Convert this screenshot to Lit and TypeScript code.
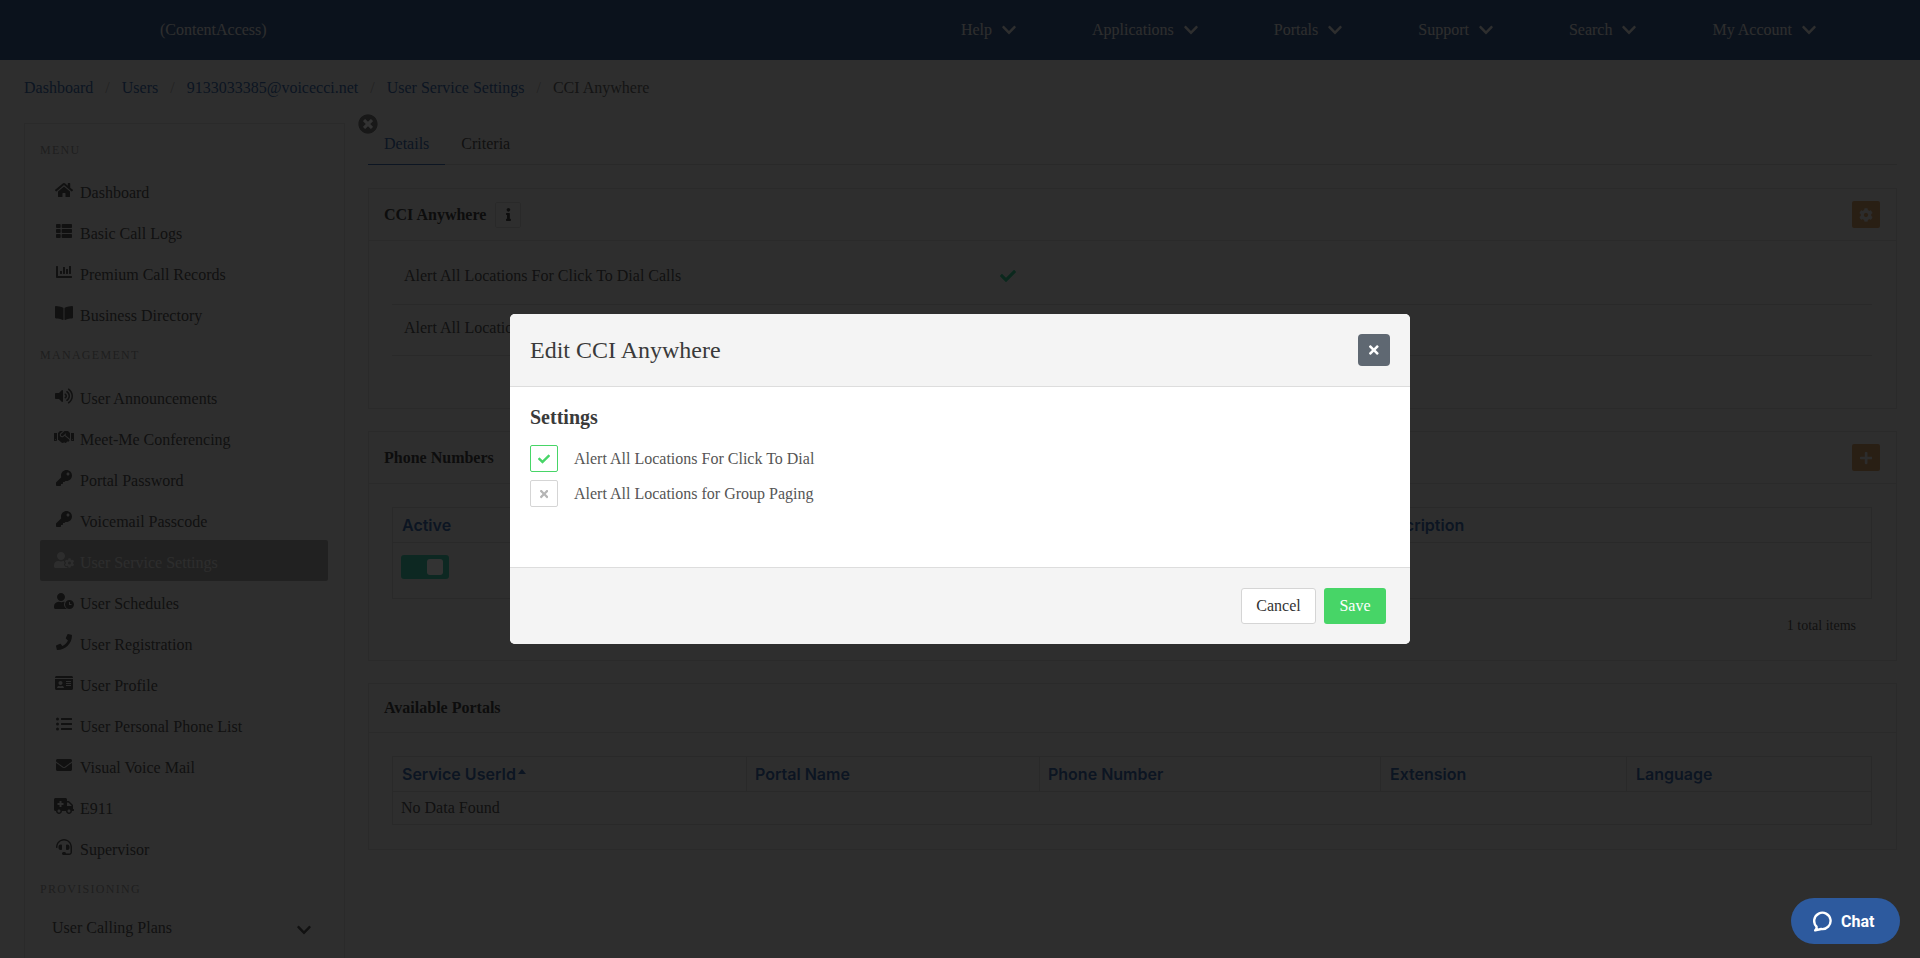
import { LitElement, html, css, svg } from "lit";
import { customElement } from "lit/decorators.js";

type Ic = [number, string];
const I: Record<string, Ic> = {
  check: [512, "M173.898 439.404l-166.4-166.4c-9.997-9.997-9.997-26.206 0-36.204l36.203-36.204c9.997-9.998 26.207-9.998 36.204 0L192 312.69 432.095 72.596c9.997-9.997 26.207-9.997 36.204 0l36.203 36.204c9.997 9.997 9.997 26.206 0 36.204l-294.4 294.401c-9.998 9.997-26.207 9.997-36.204-.001z"],
  times: [352, "M242.72 256l100.07-100.07c12.28-12.28 12.28-32.19 0-44.48l-22.24-22.24c-12.28-12.28-32.19-12.28-44.48 0L176 189.28 75.93 89.21c-12.28-12.28-32.19-12.28-44.48 0L9.21 111.45c-12.28 12.28-12.28 32.19 0 44.48L109.28 256 9.21 356.07c-12.28 12.28-12.28 32.19 0 44.48l22.24 22.24c12.28 12.28 32.2 12.28 44.48 0L176 322.72l100.07 100.07c12.28 12.28 32.2 12.28 44.48 0l22.24-22.24c12.28-12.28 12.28-32.19 0-44.48L242.72 256z"],
  chevron: [448, "M207.029 381.476L12.686 187.132c-9.373-9.373-9.373-24.569 0-33.941l22.667-22.667c9.357-9.357 24.522-9.375 33.901-.04L224 284.505l154.745-154.021c9.379-9.335 24.544-9.317 33.901.04l22.667 22.667c9.373 9.373 9.373 24.569 0 33.941L240.971 381.476c-9.373 9.372-24.569 9.372-33.942 0z"],
  home: [576, "M280.37 148.26L96 300.11V464a16 16 0 0 0 16 16l112.06-.29a16 16 0 0 0 15.92-16V368a16 16 0 0 1 16-16h64a16 16 0 0 1 16 16v95.64a16 16 0 0 0 16 16.05L464 480a16 16 0 0 0 16-16V300L295.67 148.26a12.19 12.19 0 0 0-15.3 0zM571.6 251.47L488 182.56V44.05a12 12 0 0 0-12-12h-56a12 12 0 0 0-12 12v72.61L318.47 43a48 48 0 0 0-61 0L4.34 251.47a12 12 0 0 0-1.6 16.9l25.5 31A12 12 0 0 0 45.15 301l235.22-193.74a12.19 12.19 0 0 1 15.3 0L530.9 301a12 12 0 0 0 16.9-1.6l25.5-31a12 12 0 0 0-1.7-16.93z"],
  thList: [512, "M149.333 216v80c0 13.255-10.745 24-24 24H24c-13.255 0-24-10.745-24-24v-80c0-13.255 10.745-24 24-24h101.333c13.255 0 24 10.745 24 24zM0 376v80c0 13.255 10.745 24 24 24h101.333c13.255 0 24-10.745 24-24v-80c0-13.255-10.745-24-24-24H24c-13.255 0-24 10.745-24 24zM125.333 32H24C10.745 32 0 42.745 0 56v80c0 13.255 10.745 24 24 24h101.333c13.255 0 24-10.745 24-24V56c0-13.255-10.745-24-24-24zm80 448H488c13.255 0 24-10.745 24-24v-80c0-13.255-10.745-24-24-24H205.333c-13.255 0-24 10.745-24 24v80c0 13.255 10.745 24 24 24zm-24-424v80c0 13.255 10.745 24 24 24H488c13.255 0 24-10.745 24-24V56c0-13.255-10.745-24-24-24H205.333c-13.255 0-24 10.745-24 24zm24 264H488c13.255 0 24-10.745 24-24v-80c0-13.255-10.745-24-24-24H205.333c-13.255 0-24 10.745-24 24v80c0 13.255 10.745 24 24 24z"],
  chart: [512, "M332.8 320h38.4c6.4 0 12.8-6.4 12.8-12.8V172.8c0-6.4-6.4-12.8-12.8-12.8h-38.4c-6.4 0-12.8 6.4-12.8 12.8v134.4c0 6.4 6.4 12.8 12.8 12.8zm96 0h38.4c6.4 0 12.8-6.4 12.8-12.8V76.8c0-6.4-6.4-12.8-12.8-12.8h-38.4c-6.4 0-12.8 6.4-12.8 12.8v230.4c0 6.4 6.4 12.8 12.8 12.8zm-288 0h38.4c6.4 0 12.8-6.4 12.8-12.8v-70.4c0-6.4-6.4-12.8-12.8-12.8h-38.4c-6.4 0-12.8 6.4-12.8 12.8v70.4c0 6.4 6.4 12.8 12.8 12.8zm96 0h38.4c6.4 0 12.8-6.4 12.8-12.8V108.8c0-6.4-6.4-12.8-12.8-12.8h-38.4c-6.4 0-12.8 6.4-12.8 12.8v198.4c0 6.4 6.4 12.8 12.8 12.8zM496 384H64V80c0-8.84-7.16-16-16-16H16C7.16 64 0 71.16 0 80v336c0 17.67 14.33 32 32 32h464c8.84 0 16-7.16 16-16v-32c0-8.84-7.16-16-16-16z"],
  book: [576, "M542.22 32.05c-54.8 3.11-163.72 14.43-230.96 55.59-4.64 2.84-7.27 7.89-7.27 13.17v363.87c0 11.55 12.63 18.85 23.28 13.49 69.18-34.82 169.23-44.32 218.7-46.92 16.89-.89 30.02-14.43 30.02-30.66V62.75c.01-17.71-15.35-31.74-33.77-30.7zM264.73 87.64C197.5 46.48 88.58 35.17 33.78 32.05 15.36 31.01 0 45.04 0 62.75V400.6c0 16.24 13.13 29.78 30.02 30.66 49.49 2.6 149.59 12.11 218.77 46.95 10.62 5.35 23.21-1.94 23.21-13.46V100.63c0-5.29-2.62-10.14-7.27-12.99z"],
  volume: [576, "M215.03 71.05L126.06 160H24c-13.26 0-24 10.74-24 24v144c0 13.25 10.74 24 24 24h102.06l88.97 88.95c15.03 15.03 40.97 4.47 40.97-16.97V88.02c0-21.46-25.96-31.98-40.97-16.97zm233.32-51.08c-11.17-7.33-26.18-4.24-33.51 6.95-7.34 11.17-4.22 26.18 6.95 33.51 66.27 43.49 105.82 116.6 105.82 195.58 0 78.98-39.55 152.09-105.82 195.58-11.17 7.32-14.29 22.34-6.95 33.5 7.04 10.71 21.93 14.56 33.51 6.95C528.27 439.58 576 351.33 576 256S528.27 72.43 448.35 19.97zM480 256c0-63.53-32.06-121.94-85.77-156.24-11.19-7.14-26.03-3.82-33.12 7.46s-3.78 26.21 7.41 33.36C408.27 165.97 432 209.11 432 256s-23.73 90.03-63.48 115.42c-11.19 7.14-14.5 22.07-7.41 33.36 6.51 10.36 21.12 15.14 33.12 7.46C447.94 377.94 480 319.54 480 256zm-141.77-76.87c-11.58-6.33-26.19-2.16-32.61 9.45-6.39 11.61-2.16 26.2 9.45 32.61C327.98 228.28 336 241.63 336 256c0 14.38-8.02 27.72-20.92 34.81-11.61 6.41-15.84 21-9.45 32.61 6.43 11.66 21.05 15.8 32.61 9.45 28.23-15.55 45.77-45 45.77-76.88s-17.54-61.32-45.78-76.86z"],
  hands: [640, "M434.7 64h-85.9c-8 0-15.7 3-21.6 8.4l-98.3 90c-.1.1-.2.3-.3.4-16.6 15.6-16.3 40.5-2.1 56 12.7 13.9 39.4 17.6 56.1 2.7.1-.1.3-.1.4-.2l79.9-73.2c6.5-5.9 16.7-5.5 22.6 1 6 6.5 5.5 16.6-1 22.6l-26.1 23.9L504 313.8c2.9 2.4 5.5 5 7.9 7.7V128l-54.6-54.6c-5.9-6-14.1-9.4-22.6-9.4zM544 128.2v223.9c0 17.7 14.3 32 32 32h64V128.2h-96zm48 223.9c-8.8 0-16-7.2-16-16s7.2-16 16-16 16 7.2 16 16-7.2 16-16 16zM0 384h64c17.7 0 32-14.3 32-32V128.2H0V384zm48-63.9c8.8 0 16 7.2 16 16s-7.2 16-16 16-16-7.2-16-16c0-8.9 7.2-16 16-16zm435.9 18.6L334.6 217.5l-30 27.5c-29.7 27.1-75.2 24.5-101.7-4.4-26.9-29.4-24.8-74.9 4.4-101.7L289.1 64h-83.8c-8.5 0-16.6 3.4-22.6 9.4L128 128v223.9h18.3l90.5 81.9c27.4 22.3 67.7 18.1 90-9.3l.2-.2 17.9 15.5c15.9 13 39.4 10.5 52.3-5.4l31.4-38.6 5.4 4.4c13.7 11.1 33.9 9.1 45-4.7l9.5-11.7c11.2-13.8 9.1-33.9-4.6-45.1z"],
  key: [512, "M512 176.001C512 273.203 433.202 352 336 352c-11.22 0-22.19-1.062-32.827-3.069l-24.012 27.014A23.999 23.999 0 0 1 261.223 384H224v40c0 13.255-10.745 24-24 24h-40v40c0 13.255-10.745 24-24 24H24c-13.255 0-24-10.745-24-24v-78.059c0-6.365 2.529-12.47 7.029-16.971l161.802-161.802C163.108 213.814 160 195.271 160 176 160 78.798 238.797.001 335.999 0 433.488-.001 512 78.511 512 176.001zM336 128c0 26.51 21.49 48 48 48s48-21.49 48-48-21.49-48-48-48-48 21.49-48 48z"],
  userCog: [640, "M610.5 373.3c2.6-14.1 2.6-28.5 0-42.6l25.8-14.9c3-1.7 4.3-5.2 3.3-8.5-6.7-21.6-18.2-41.2-33.2-57.4-2.3-2.5-6-3.1-9-1.4l-25.8 14.9c-10.9-9.3-23.4-16.5-36.9-21.3v-29.8c0-3.4-2.4-6.4-5.7-7.1-22.3-5-45-4.8-66.2 0-3.3.7-5.7 3.7-5.7 7.1v29.8c-13.5 4.8-26 12-36.9 21.3l-25.8-14.9c-2.9-1.7-6.7-1.1-9 1.4-15 16.2-26.5 35.8-33.2 57.4-1 3.3.4 6.8 3.3 8.5l25.8 14.9c-2.6 14.1-2.6 28.5 0 42.6l-25.8 14.9c-3 1.7-4.3 5.2-3.3 8.5 6.7 21.6 18.2 41.1 33.2 57.4 2.3 2.5 6 3.1 9 1.4l25.8-14.9c10.9 9.3 23.4 16.5 36.9 21.3v29.8c0 3.4 2.4 6.4 5.7 7.1 22.3 5 45 4.8 66.2 0 3.3-.7 5.7-3.7 5.7-7.1v-29.8c13.5-4.8 26-12 36.9-21.3l25.8 14.9c2.9 1.7 6.7 1.1 9-1.4 15-16.2 26.5-35.8 33.2-57.4 1-3.3-.4-6.8-3.3-8.5l-25.8-14.9zM496 400.5c-26.8 0-48.5-21.8-48.5-48.5s21.8-48.5 48.5-48.5 48.5 21.8 48.5 48.5-21.7 48.5-48.5 48.5zM224 256c70.7 0 128-57.3 128-128S294.7 0 224 0 96 57.3 96 128s57.3 128 128 128zm201.2 226.5c-2.3-1.2-4.6-2.6-6.8-3.9l-7.9 4.6c-6 3.4-12.8 5.3-19.6 5.3-10.9 0-21.4-4.6-28.9-12.6-18.3-19.8-32.3-43.9-40.2-69.6-5.5-17.7 1.9-36.4 17.9-45.7l7.9-4.6c-.1-2.6-.1-5.2 0-7.8l-7.9-4.6c-16-9.2-23.4-28-17.9-45.7.9-2.9 2.2-5.8 3.2-8.7-3.8-.3-7.5-1.2-11.4-1.2h-16.7c-22.2 10.2-46.9 16-72.9 16s-50.6-5.8-72.9-16h-16.7C60.2 288 0 348.2 0 422.4V464c0 26.5 21.5 48 48 48h352c10.1 0 19.5-3.2 27.2-8.5-1.2-3.8-2-7.7-2-11.8v-9.2z"],
  userClock: [640, "M496 224c-79.6 0-144 64.4-144 144s64.4 144 144 144 144-64.4 144-144-64.4-144-144-144zm64 150.3c0 5.3-4.4 9.7-9.7 9.7h-60.6c-5.3 0-9.7-4.4-9.7-9.7v-76.6c0-5.3 4.4-9.7 9.7-9.7h12.6c5.3 0 9.7 4.4 9.7 9.7V352h38.3c5.3 0 9.7 4.4 9.7 9.7v12.6zM224 256c70.7 0 128-57.3 128-128S294.7 0 224 0 96 57.3 96 128s57.3 128 128 128zm96 112c0-31.4 9.2-60.6 24.9-85.3-6.4-.9-12.7-2.7-19.4-2.7h-16.7c-22.2 10.2-46.9 16-72.9 16s-50.6-5.8-72.9-16h-16.7C60.2 288 0 348.2 0 422.4V464c0 26.5 21.5 48 48 48h352c5.5 0 10.8-1 15.7-2.7C358.6 480.3 320 428.6 320 368z"],
  phone: [512, "M493.4 24.6l-104-24c-11.3-2.6-22.9 3.3-27.5 13.9l-48 112c-4.2 9.8-1.4 21.3 6.9 28l60.6 49.6c-36 76.7-98.9 140.5-177.2 177.2l-49.6-60.6c-6.8-8.3-18.2-11.1-28-6.9l-112 48C3.9 366.5-2 378.1.6 389.4l24 104C27.1 504.2 36.7 512 48 512c256.1 0 464-207.5 464-464 0-11.2-7.7-20.9-18.6-23.4z"],
  idCard: [576, "M528 32H48C21.5 32 0 53.5 0 80v16h576V80c0-26.5-21.5-48-48-48zM0 432c0 26.5 21.5 48 48 48h480c26.5 0 48-21.5 48-48V128H0v304zm352-232c0-4.4 3.6-8 8-8h144c4.4 0 8 3.6 8 8v16c0 4.4-3.6 8-8 8H360c-4.4 0-8-3.6-8-8v-16zm0 64c0-4.4 3.6-8 8-8h144c4.4 0 8 3.6 8 8v16c0 4.4-3.6 8-8 8H360c-4.4 0-8-3.6-8-8v-16zm0 64c0-4.4 3.6-8 8-8h144c4.4 0 8 3.6 8 8v16c0 4.4-3.6 8-8 8H360c-4.4 0-8-3.6-8-8v-16zM176 192c35.3 0 64 28.7 64 64s-28.7 64-64 64-64-28.7-64-64 28.7-64 64-64zM67.1 396.2C75.5 370.5 99.6 352 128 352h8.2c12.3 5.1 25.7 8 39.8 8s27.6-2.9 39.8-8h8.2c28.4 0 52.5 18.5 60.9 44.2 3.2 9.9-5.2 19.8-15.6 19.8H82.7c-10.4 0-18.8-10-15.6-19.8z"],
  list: [512, "M48 48a48 48 0 1 0 48 48 48 48 0 0 0-48-48zm0 160a48 48 0 1 0 48 48 48 48 0 0 0-48-48zm0 160a48 48 0 1 0 48 48 48 48 0 0 0-48-48zm448 16H176a16 16 0 0 0-16 16v32a16 16 0 0 0 16 16h320a16 16 0 0 0 16-16v-32a16 16 0 0 0-16-16zm0-320H176a16 16 0 0 0-16 16v32a16 16 0 0 0 16 16h320a16 16 0 0 0 16-16V80a16 16 0 0 0-16-16zm0 160H176a16 16 0 0 0-16 16v32a16 16 0 0 0 16 16h320a16 16 0 0 0 16-16v-32a16 16 0 0 0-16-16z"],
  envelope: [512, "M502.3 190.8c3.9-3.1 9.7-.2 9.7 4.7V400c0 26.5-21.5 48-48 48H48c-26.5 0-48-21.5-48-48V195.6c0-5 5.7-7.8 9.7-4.7 22.4 17.4 52.1 39.5 154.1 113.6 21.1 15.4 56.7 47.8 92.2 47.6 35.7.3 72-32.8 92.3-47.6 102-74.1 131.6-96.3 154-113.7zM256 320c23.2.4 56.6-29.2 73.4-41.4 132.7-96.3 142.8-104.7 173.4-128.7 5.8-4.5 9.2-11.5 9.2-18.9v-19c0-26.5-21.5-48-48-48H48C21.5 64 0 85.5 0 112v19c0 7.4 3.4 14.3 9.2 18.9 30.6 23.9 40.7 32.4 173.4 128.7 16.8 12.2 50.2 41.8 73.4 41.4z"],
  ambulance: [640, "M624 352h-16V243.9c0-12.7-5.1-24.9-14.1-33.9L494 110.1c-9-9-21.2-14.1-33.9-14.1H416V48c0-26.5-21.5-48-48-48H48C21.5 0 0 21.5 0 48v320c0 26.5 21.5 48 48 48h16c0 53 43 96 96 96s96-43 96-96h128c0 53 43 96 96 96s96-43 96-96h48c8.8 0 16-7.2 16-16v-32c0-8.8-7.2-16-16-16zM160 464c-26.5 0-48-21.5-48-48s21.5-48 48-48 48 21.5 48 48-21.5 48-48 48zm144-248c0 4.4-3.6 8-8 8h-56v56c0 4.4-3.6 8-8 8h-48c-4.4 0-8-3.6-8-8v-56h-56c-4.4 0-8-3.6-8-8v-48c0-4.4 3.6-8 8-8h56v-56c0-4.4 3.6-8 8-8h48c4.4 0 8 3.6 8 8v56h56c4.4 0 8 3.6 8 8v48zm176 248c-26.5 0-48-21.5-48-48s21.5-48 48-48 48 21.5 48 48-21.5 48-48 48zm80-208H416V144h44.1l99.9 99.9V256z"],
  headset: [512, "M192 208c0-17.67-14.33-32-32-32h-16c-35.35 0-64 28.65-64 64v48c0 35.35 28.65 64 64 64h16c17.67 0 32-14.33 32-32V208zm176 144c35.35 0 64-28.65 64-64v-48c0-35.35-28.65-64-64-64h-16c-17.67 0-32 14.33-32 32v112c0 17.67 14.33 32 32 32h16zM256 0C113.18 0 4.58 118.83 0 256v16c0 8.84 7.16 16 16 16h16c8.84 0 16-7.16 16-16v-16c0-114.69 93.31-208 208-208s208 93.31 208 208h-.12c.08 2.43.12 165.72.12 165.72 0 23.35-18.93 42.28-42.28 42.28H320c0-26.51-21.49-48-48-48h-32c-26.51 0-48 21.49-48 48s21.49 48 48 48h181.72c49.86 0 90.28-40.42 90.28-90.28V256C507.42 118.83 398.82 0 256 0z"],
  info: [192, "M20 424.229h20V279.771H20c-11.046 0-20-8.954-20-20V212c0-11.046 8.954-20 20-20h112c11.046 0 20 8.954 20 20v212.229h20c11.046 0 20 8.954 20 20V492c0 11.046-8.954 20-20 20H20c-11.046 0-20-8.954-20-20v-47.771c0-11.046 8.954-20 20-20zM96 0C56.235 0 24 32.235 24 72s32.235 72 72 72 72-32.235 72-72S135.764 0 96 0z"],
  cog: [512, "M487.4 315.7l-42.6-24.6c4.3-23.2 4.3-47 0-70.2l42.6-24.6c4.9-2.8 7.1-8.6 5.5-14-11.1-35.6-30-67.8-54.7-94.6-3.8-4.1-10-5.1-14.8-2.3L380.8 110c-17.9-15.4-38.5-27.3-60.8-35.1V25.8c0-5.6-3.9-10.5-9.4-11.7-36.7-8.2-74.3-7.8-109.2 0-5.5 1.2-9.4 6.1-9.4 11.7V75c-22.2 7.9-42.8 19.8-60.8 35.1L88.7 85.5c-4.9-2.8-11-1.9-14.8 2.3-24.7 26.7-43.6 58.9-54.7 94.6-1.7 5.4.6 11.2 5.5 14L67.3 221c-4.3 23.2-4.3 47 0 70.2l-42.6 24.6c-4.9 2.8-7.1 8.6-5.5 14 11.1 35.6 30 67.8 54.7 94.6 3.8 4.1 10 5.1 14.8 2.3l42.6-24.6c17.9 15.4 38.5 27.3 60.8 35.1v49.2c0 5.6 3.9 10.5 9.4 11.7 36.7 8.2 74.3 7.8 109.2 0 5.5-1.2 9.4-6.1 9.4-11.7v-49.2c22.2-7.9 42.8-19.8 60.8-35.1l42.6 24.6c4.9 2.8 11 1.9 14.8-2.3 24.7-26.7 43.6-58.9 54.7-94.6 1.5-5.5-.7-11.3-5.6-14.1zM256 336c-44.1 0-80-35.9-80-80s35.9-80 80-80 80 35.9 80 80-35.9 80-80 80z"],
  plus: [448, "M416 208H272V64c0-17.67-14.33-32-32-32h-32c-17.67 0-32 14.33-32 32v144H32c-17.67 0-32 14.33-32 32v32c0 17.67 14.33 32 32 32h144v144c0 17.67 14.33 32 32 32h32c17.67 0 32-14.33 32-32V304h144c17.67 0 32-14.33 32-32v-32c0-17.67-14.33-32-32-32z"],
  timesCircle: [512, "M256 8C119 8 8 119 8 256s111 248 248 248 248-111 248-248S393 8 256 8zm121.6 313.1c4.7 4.7 4.7 12.3 0 17L338 377.6c-4.7 4.7-12.3 4.7-17 0L256 312l-65.1 65.6c-4.7 4.7-12.3 4.7-17 0L134.4 338c-4.7-4.7-4.7-12.3 0-17l65.6-65-65.6-65.1c-4.7-4.7-4.7-12.3 0-17l39.6-39.6c4.7-4.7 12.3-4.7 17 0l65 65.7 65.1-65.6c4.7-4.7 12.3-4.7 17 0l39.6 39.6c4.7 4.7 4.7 12.3 0 17L312 256l65.6 65.1z"],
};

const icon = (name: string) => {
  const [w, d] = I[name];
  return html`<svg class="ic" viewBox="0 0 ${w} 512" fill="currentColor" aria-hidden="true">${svg`<path d=${d}></path>`}</svg>`;
};

const NAV = ["Help", "Applications", "Portals", "Support", "Search", "My Account"];
const CRUMBS = ["Dashboard", "Users", "9133033385@voicecci.net", "User Service Settings"];
const MENU: [string, string][] = [
  ["home", "Dashboard"],
  ["thList", "Basic Call Logs"],
  ["chart", "Premium Call Records"],
  ["book", "Business Directory"],
];
const MANAGEMENT: [string, string][] = [
  ["volume", "User Announcements"],
  ["hands", "Meet-Me Conferencing"],
  ["key", "Portal Password"],
  ["key", "Voicemail Passcode"],
  ["userCog", "User Service Settings"],
  ["userClock", "User Schedules"],
  ["phone", "User Registration"],
  ["idCard", "User Profile"],
  ["list", "User Personal Phone List"],
  ["envelope", "Visual Voice Mail"],
  ["ambulance", "E911"],
  ["headset", "Supervisor"],
];
const PORTAL_COLS = ["Service UserId", "Portal Name", "Phone Number", "Extension", "Language"];

@customElement("app-root")
export class AppRoot extends LitElement {
  static styles = css`
    :host {
      display: block;
      width: 1920px;
      height: 958px;
      overflow: hidden;
      position: relative;
      background: #e7e7e7;
      font-family: "Liberation Serif", serif;
      font-size: 16px;
      line-height: 24px;
      color: #555;
    }
    .ic { display: block; height: 1em; width: auto; }

    .nav {
      height: 60px;
      background: #385a8c;
      color: #e4e4e4;
      display: flex;
      align-items: center;
      padding: 0 104px 0 160px;
    }
    .nav-items { margin-left: auto; display: flex; gap: 76px; }
    .nav-item { display: flex; align-items: center; gap: 10px; }
    .nav-item .ic { height: 16px; }

    .crumbs { display: flex; gap: 12px; padding: 16px 24px 23px; }
    .crumbs a { color: #3e6aa8; }
    .crumbs .sep { color: #aaa; }
    .crumbs .cur { color: #666; }

    .main {
      display: grid;
      grid-template-columns: 321px 1529px;
      column-gap: 23px;
      padding-left: 24px;
      align-items: start;
    }
    .side {
      border: 1px solid #d0d0d0;
      padding: 5px 16px 0 15px;
      height: 900px;
      box-sizing: border-box;
    }
    .label {
      height: 42px;
      display: flex;
      align-items: center;
      font-size: 12px;
      letter-spacing: 1.3px;
      color: #999;
    }
    .label.first { height: 41px; }
    .row {
      height: 41px;
      display: flex;
      align-items: center;
      gap: 6px;
      padding: 5px 0 0 14px;
      box-sizing: border-box;
      border-radius: 2px;
    }
    .row .w { width: 20px; display: flex; justify-content: center; margin-bottom: 6px; }
    .row .ic { height: 16px; }
    .row.on { background: #a4a4a4; color: #e0e0e0; }
    .row.sub { padding: 0 17px 0 12px; justify-content: space-between; height: 36px; }
    .row.sub .ic { height: 16px; margin-top: 4px; }

    .right { position: relative; padding-top: 1px; display: flex; flex-direction: column; }
    .dismiss { position: absolute; left: -10px; top: -9px; color: #777; font-size: 20px; background: #fff; border-radius: 50%; width: 20px; height: 20px; }
    .tabs { display: flex; height: 40px; border-bottom: 1px solid #ccc; margin-bottom: 23px; }
    .tab { padding: 8px 16px 0; height: 32px; }
    .tab.on { color: #3e6aa8; border-bottom: 1px solid #3e6aa8; }

    .card { border: 1px solid #d0d0d0; margin-bottom: 22px; }
    .card-h {
      height: 51px;
      border-bottom: 1px solid #d0d0d0;
      padding: 0 16px 0 15px;
      display: flex;
      align-items: center;
      font-weight: bold;
      color: #444;
    }
    .card-h.short { height: 48px; }
    .info { margin-left: 9px; width: 26px; height: 26px; border: 1px solid #ccc; border-radius: 2px; box-sizing: border-box; display: flex; align-items: center; justify-content: center; }
    .info .ic { height: 13px; }
    .act { margin-left: auto; width: 28px; height: 27px; background: #cc9a66; color: #ddd; display: flex; align-items: center; justify-content: center; border-radius: 2px; }
    .act .ic { height: 14px; }

    .kv { padding: 23px 24px 52px 23px; }
    .kv-row { display: grid; grid-template-columns: 596px 1fr; border-bottom: 1px solid #ccc; padding: 0 0 16px 12px; }
    .kv-row + .kv-row { padding: 11px 0 15px 12px; }
    .kv-row .ok { color: #38c890; display: flex; align-items: center; }
    .kv-row .ok .ic { height: 16px; }

    .tb-wrap { padding: 23px 24px 0 23px; }
    .tb { border: 1px solid #ccc; }
    .tr { display: grid; }
    .th {
      height: 34px;
      display: flex;
      align-items: center;
      gap: 2px;
      padding-left: 9px;
      font-family: Inter, "Liberation Sans", sans-serif;
      font-weight: 600;
      color: #3e6aa8;
      border-bottom: 1px solid #ccc;
      box-sizing: content-box;
    }
    .th + .th { border-left: 1px solid #ccc; padding-left: 8px; }
    .th:nth-child(n + 4) { padding-left: 9px; }
    .phones .th + .th { border-left: 0; }
    .phones .tr { grid-template-columns: 974px 1fr; }
    .portals .tr { grid-template-columns: 353px 293px 341px 246px 1fr; }
    .caret { width: 0; height: 0; border: 4px solid transparent; border-top: 0; border-bottom: 5px solid #3e6aa8; margin-bottom: 6px; }
    .td { padding: 12px 8px 19px; }
    .toggle { width: 48px; height: 24px; background: #40c8a8; border-radius: 3px; display: flex; align-items: center; justify-content: flex-end; padding-right: 6px; box-sizing: border-box; }
    .toggle i { display: block; width: 16px; height: 16px; background: #fff; border-radius: 3px; }
    .total { text-align: right; font-size: 14px; padding: 15px 16px 22px 0; color: #555; }
    .none { padding: 4px 8px; height: 24px; }
    .portals-wrap { padding-bottom: 24px; }

    .scrim {
      position: absolute;
      inset: 0;
      background: rgba(0, 0, 0, 0.8);
      display: flex;
      align-items: center;
      justify-content: center;
    }
    .modal { width: 900px; background: #fff; border-radius: 5px; overflow: hidden; color: #3a3a3a; }
    .m-h {
      height: 73px;
      box-sizing: border-box;
      padding: 0 20px;
      background: #f4f4f4;
      border-bottom: 1px solid #ddd;
      display: flex;
      align-items: center;
      justify-content: space-between;
      font-size: 24px;
    }
    .m-x { width: 32px; height: 32px; background: #5f6872; color: #fff; border-radius: 4px; display: flex; align-items: center; justify-content: center; }
    .m-x .ic { height: 14px; }
    .m-b { height: 180px; box-sizing: border-box; padding: 16px 20px 0; }
    .m-t { font-size: 20px; font-weight: bold; line-height: 28px; margin-bottom: 14px; }
    .opts { display: flex; flex-direction: column; gap: 8px; }
    .opt { display: flex; align-items: center; gap: 16px; color: #555; height: 27px; }
    .box { width: 28px; height: 27px; border: 1px solid #d5d5d5; border-radius: 2px; box-sizing: border-box; display: flex; align-items: center; justify-content: center; color: #b5b5b5; }
    .box .ic { height: 12px; }
    .box.yes { border-color: #47d567; color: #47d567; }
    .m-f {
      height: 77px;
      box-sizing: border-box;
      background: #f4f4f4;
      border-top: 1px solid #ddd;
      padding: 20px 24px 0 0;
      display: flex;
      justify-content: flex-end;
      gap: 8px;
    }
    .btn { height: 36px; box-sizing: border-box; border-radius: 3px; display: flex; align-items: center; justify-content: center; }
    .btn.c { width: 75px; background: #fff; border: 1px solid #d5d5d5; color: #333; }
    .btn.s { width: 62px; background: #47d567; color: #fff; }

    .chat {
      position: absolute;
      right: 20px;
      bottom: 14px;
      width: 109px;
      height: 46px;
      border-radius: 23px;
      background: #2d5a9e;
      color: #fff;
      display: flex;
      align-items: center;
      gap: 9px;
      padding-left: 22px;
      box-sizing: border-box;
      font-family: Roboto, "Liberation Sans", sans-serif;
      font-weight: 700;
      font-size: 16px;
    }
    .chat span { padding-top: 2px; }
    .chat svg { width: 19px; height: 21px; display: block; }
  `;

  private row(r: [string, string], on = false) {
    return html`<div class="row ${on ? "on" : ""}"><span class="w">${icon(r[0])}</span><span>${r[1]}</span></div>`;
  }

  render() {
    return html`
      <header class="nav">
        <span>(ContentAccess)</span>
        <nav class="nav-items">
          ${NAV.map((n) => html`<div class="nav-item"><span>${n}</span>${icon("chevron")}</div>`)}
        </nav>
      </header>

      <div class="crumbs">
        ${CRUMBS.map((c) => html`<a>${c}</a><span class="sep">/</span>`)}
        <span class="cur">CCI Anywhere</span>
      </div>

      <div class="main">
        <aside class="side">
          <div class="label first">MENU</div>
          ${MENU.map((r) => this.row(r))}
          <div class="label">MANAGEMENT</div>
          ${MANAGEMENT.map((r) => this.row(r, r[1] === "User Service Settings"))}
          <div class="label">PROVISIONING</div>
          <div class="row sub"><span>User Calling Plans</span>${icon("chevron")}</div>
        </aside>

        <section class="right">
          <span class="dismiss">${icon("timesCircle")}</span>
          <div class="tabs">
            <div class="tab on">Details</div>
            <div class="tab">Criteria</div>
          </div>

          <div class="card">
            <div class="card-h">
              <span>CCI Anywhere</span>
              <span class="info">${icon("info")}</span>
              <span class="act">${icon("cog")}</span>
            </div>
            <div class="kv">
              <div class="kv-row"><span>Alert All Locations For Click To Dial Calls</span><span class="ok">${icon("check")}</span></div>
              <div class="kv-row"><span>Alert All Locations For Group Paging</span><span></span></div>
            </div>
          </div>

          <div class="card">
            <div class="card-h">
              <span>Phone Numbers</span>
              <span class="act">${icon("plus")}</span>
            </div>
            <div class="tb-wrap phones">
              <div class="tb">
                <div class="tr"><div class="th">Active</div><div class="th">Description</div></div>
                <div class="tr"><div class="td"><div class="toggle"><i></i></div></div><div class="td"></div></div>
              </div>
              <div class="total">1 total items</div>
            </div>
          </div>

          <div class="card">
            <div class="card-h short"><span>Available Portals</span></div>
            <div class="tb-wrap portals portals-wrap">
              <div class="tb">
                <div class="tr">
                  ${PORTAL_COLS.map((c, i) => html`<div class="th">${c}${i === 0 ? html`<span class="caret"></span>` : ""}</div>`)}
                </div>
                <div class="none">No Data Found</div>
              </div>
            </div>
          </div>
        </section>
      </div>

      <div class="scrim">
        <div class="modal" role="dialog">
          <div class="m-h"><span>Edit CCI Anywhere</span><span class="m-x">${icon("times")}</span></div>
          <div class="m-b">
            <div class="m-t">Settings</div>
            <div class="opts">
              <div class="opt"><span class="box yes">${icon("check")}</span><span>Alert All Locations For Click To Dial</span></div>
              <div class="opt"><span class="box">${icon("times")}</span><span>Alert All Locations for Group Paging</span></div>
            </div>
          </div>
          <div class="m-f"><span class="btn c">Cancel</span><span class="btn s">Save</span></div>
        </div>
      </div>

      <div class="chat">
        <svg viewBox="0 0 19 21" fill="none" stroke="currentColor" stroke-width="2.4" stroke-linecap="round" stroke-linejoin="round">
          <path d="M3.5 15.6A8.2 8.2 0 1 1 8.2 18 L2.2 19.4 C3.4 18.2 3.8 17 3.5 15.6Z"></path>
        </svg>
        <span>Chat</span>
      </div>
    `;
  }
}
